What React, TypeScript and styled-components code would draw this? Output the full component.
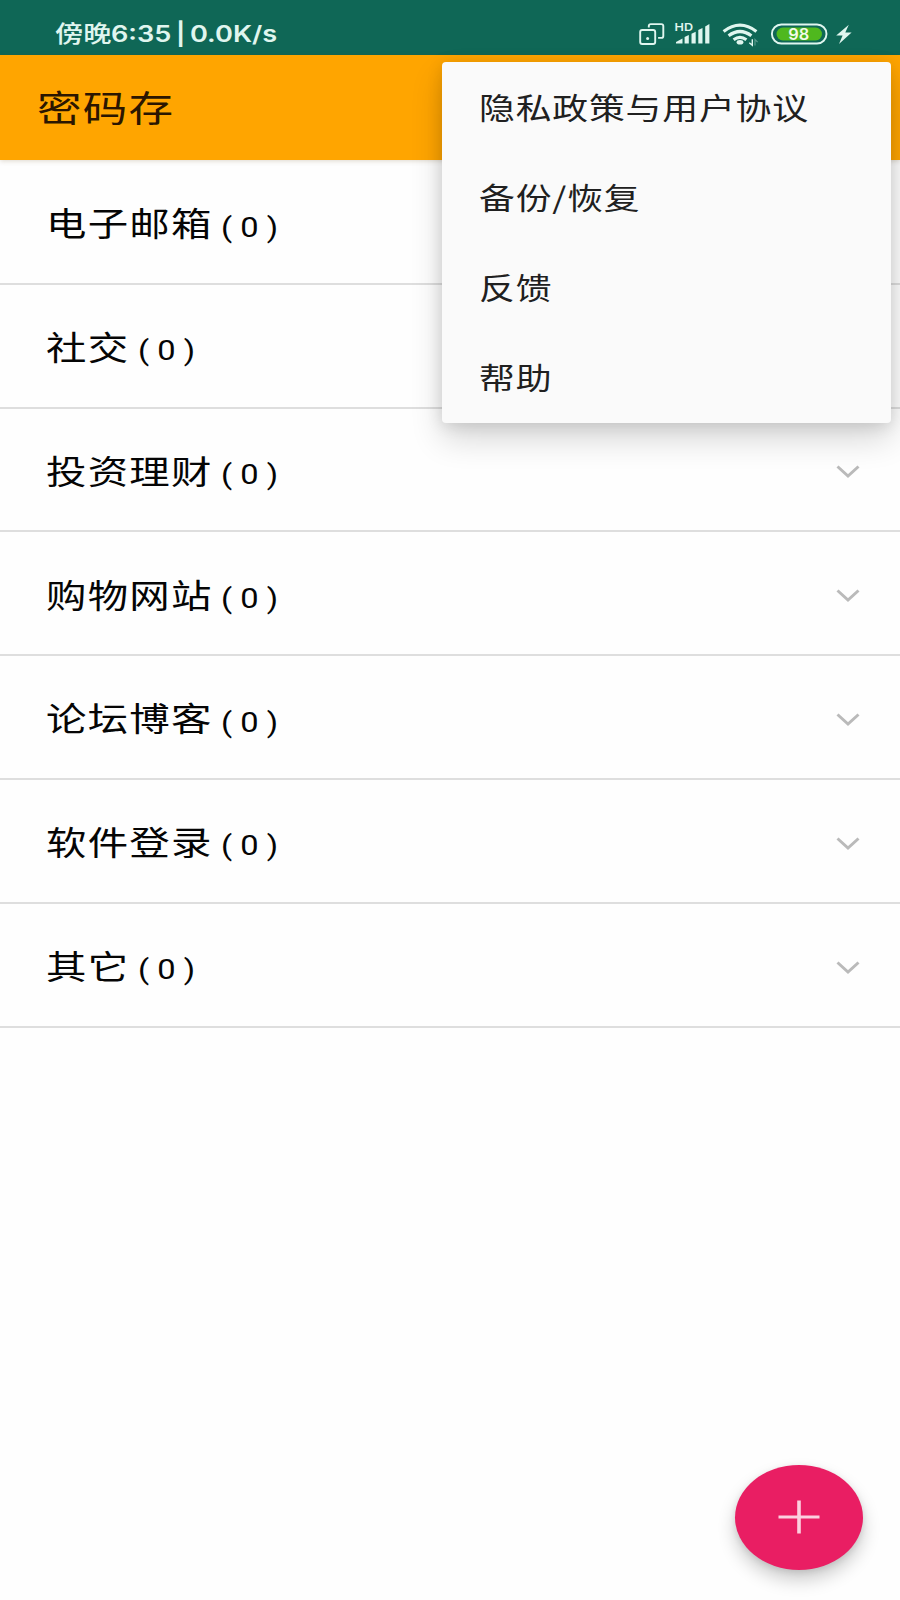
import React from "react";
import styled, { createGlobalStyle } from "styled-components";

const GlobalStyle = createGlobalStyle`
  * { box-sizing: border-box; }
  body {
    margin: 0;
    background: #fefefe;
    font-family: "Noto Sans", "Noto Sans CJK SC", sans-serif;
  }
`;

const Screen = styled.div`
  position: relative;
  width: 900px;
  height: 1600px;
  overflow: hidden;
  display: flex;
  flex-direction: column;
  background: #fefefe;
`;

/* Type on this screen is wider than it is tall. */
const Wide = styled.span<{ $size: number; $tracking?: number }>`
  display: block;
  flex: none;
  white-space: pre;
  line-height: 1;
  font-family: "Noto Sans CJK SC", sans-serif;
  font-size: ${(p) => p.$size}px;
  letter-spacing: ${(p) => p.$tracking ?? 0}px;
  transform: scaleX(1.218);
  transform-origin: left center;
`;

const StatusBar = styled.header`
  flex: none;
  height: 55px;
  padding: 12px 48px 0 54.5px;
  display: flex;
  justify-content: space-between;
  align-items: center;
  color: #e0f6ef;
  background: #0f6756;
`;

const Clock = styled.div`
  display: flex;
  align-items: center;
`;

const ClockWord = styled(Wide)`
  width: 56.5px;
  margin-bottom: 1px;
  font-weight: 500;
`;

const ClockDigits = styled(Wide)`
  margin-top: 2px;
  font-family: Inter, "Noto Sans", sans-serif;
  font-weight: 560;
  word-spacing: -2px;
`;

const StatusIcons = styled.svg`
  display: block;
  flex: none;
`;

const AppBar = styled.div`
  position: relative;
  z-index: 1;
  flex: none;
  height: 105px;
  padding: 0 36.5px;
  display: flex;
  align-items: center;
  color: #2b1600;
  background: #ffa500;
  box-shadow: 0 1px 5px rgba(90, 60, 0, 0.2);
`;

const List = styled.main`
  display: flex;
  flex-direction: column;
  padding-top: 1px;
`;

const Row = styled.section`
  height: 123.8px;
  padding: 0 40px 0 45.5px;
  display: flex;
  align-items: center;
  border-bottom: 2px solid #dedede;
  color: #050505;
`;

const Name = styled.div<{ $chars: number }>`
  flex: none;
  width: ${(p) => p.$chars * 41.65}px;
`;

const Count = styled(Wide)`
  margin: 12px 0 0 1px;
  font-family: Roboto, sans-serif;
`;

const Chevron = styled.svg`
  display: block;
  margin-left: auto;
  margin-top: 6px;
`;

const Menu = styled.nav`
  position: absolute;
  z-index: 2;
  top: 62px;
  left: 442px;
  width: 449px;
  height: 361px;
  display: flex;
  flex-direction: column;
  border-radius: 4px;
  background: #fafafa;
  box-shadow: 0 16px 32px rgba(0, 0, 0, 0.16), 0 2px 16px rgba(0, 0, 0, 0.12);
`;

const MenuItem = styled.div`
  flex: 1;
  display: flex;
  align-items: center;
  padding: 0 0 1.5px 36.5px;
  color: #202020;
`;

const Fab = styled.button`
  position: absolute;
  left: 735px;
  top: 1464.5px;
  width: 128px;
  height: 105px;
  padding: 0;
  border: 0;
  border-radius: 50%;
  display: flex;
  align-items: center;
  justify-content: center;
  background: #e91e63;
  box-shadow: 0 10px 18px rgba(0, 0, 0, 0.2), 0 2px 6px rgba(0, 0, 0, 0.1);
`;

const categories = [
  "电子邮箱",
  "社交",
  "投资理财",
  "购物网站",
  "论坛博客",
  "软件登录",
  "其它",
];

const menuItems = ["隐私政策与用户协议", "备份/恢复", "反馈", "帮助"];

function SystemIcons() {
  return (
    <StatusIcons width="216" height="30" viewBox="636 18.5 216 30" fill="none">
      <g stroke="#e0f6ef" strokeWidth="1.9">
        <rect x="640.2" y="29.5" width="15" height="14" rx="2" />
        <path d="M648.8 27v-1.4q0-2 2-2h10.5q2 0 2 2v9.8q0 2-2 2h-3.2" />
      </g>
      <circle cx="647.6" cy="38" r="1.5" fill="#e0f6ef" />
      <text
        x="674.5"
        y="30"
        fill="#e0f6ef"
        fontFamily="Inter, sans-serif"
        fontSize="10.5"
        fontWeight="600"
        textLength="18.5"
        lengthAdjust="spacingAndGlyphs"
      >
        HD
      </text>
      <g fill="#e0f6ef">
        <path d="M676 43v-1.500l6.500-3.500v5z" />
        <path d="M684.600 43v-6.500l4.200-2V43z" />
        <path d="M691.500 43V33.200l4.200-2V43z" />
        <path d="M698.300 43V29.600l4.200-2V43z" />
        <path d="M705.200 43V26l4.200-2.400V43z" />
      </g>
      <g stroke="#e0f6ef" strokeWidth="3.2">
        <path d="M723.6 31q16.4-12.6 32.8 0" />
        <path d="M728.6 35.300q11.4-8.6 22.8 0" />
        <path d="M733.6 39.300q6.4-4.8 12.8 0" />
      </g>
      <ellipse cx="740" cy="41.8" rx="3.4" ry="2.3" fill="#e0f6ef" />
      <path d="M752.3 38.8v6l-3-2.6" stroke="#e0f6ef" strokeWidth="1.4" />
      <path d="M755 45v-6l2.6 2.6" stroke="#e0f6ef" strokeWidth="1.2" opacity=".35" />
      <rect x="771.9" y="24" width="54.6" height="19" rx="9.5" stroke="#e0f6ef" strokeWidth="1.9" />
      <rect x="776.5" y="27" width="45.5" height="13" rx="6.5" fill="#4fb81e" />
      <text
        x="788.3"
        y="39.3"
        fill="#f2fbe9"
        fontFamily="Inter, sans-serif"
        fontSize="15.6"
        fontWeight="600"
        textLength="21"
        lengthAdjust="spacingAndGlyphs"
      >
        98
      </text>
      <path d="M848.8 24.2L836.2 35h6.400l-3.600 8.600L851.600 32h-6.300z" fill="#e0f6ef" />
    </StatusIcons>
  );
}

export default function App() {
  return (
    <>
      <GlobalStyle />
      <Screen>
        <StatusBar>
          <Clock>
            <ClockWord $size={23.2}>傍晚</ClockWord>
            <ClockDigits $size={22.3}>6:35 | 0.0K/s</ClockDigits>
          </Clock>
          <SystemIcons />
        </StatusBar>
        <AppBar>
          <Wide $size={36.6} $tracking={1}>密码存</Wide>
        </AppBar>
        <List>
          {categories.map((name) => (
            <Row key={name}>
              <Name $chars={name.length}>
                <Wide $size={33.2} $tracking={1}>{name}</Wide>
              </Name>
              <Count $size={26.8}> ( 0 )</Count>
              <Chevron width="24" height="14" viewBox="0 0 24 14" fill="none">
                <path d="M1.5 1.5l10.500 9.500L22.500 1.500" stroke="#bababa" strokeWidth="3" />
              </Chevron>
            </Row>
          ))}
        </List>
        <Menu>
          {menuItems.map((item) => (
            <MenuItem key={item}>
              <Wide $size={29.4} $tracking={0.7}>{item}</Wide>
            </MenuItem>
          ))}
        </Menu>
        <Fab aria-label="添加">
          <svg width="42" height="36" viewBox="0 0 42 36" fill="none">
            <path d="M.5 18h41" stroke="#fbd0df" strokeWidth="3" />
            <path d="M21 1.500v33" stroke="#fbd0df" strokeWidth="3.6" />
          </svg>
        </Fab>
      </Screen>
    </>
  );
}
